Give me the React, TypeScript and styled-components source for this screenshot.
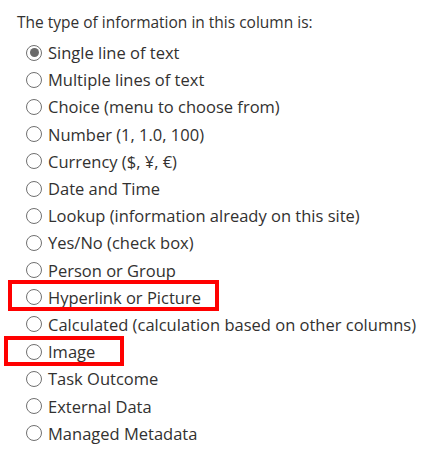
import React, { useState } from 'react';
import styled, { createGlobalStyle } from 'styled-components';

const GlobalStyle = createGlobalStyle`
  html, body {
    margin: 0;
    padding: 0;
    background: #ffffff;
  }
  body {
    font-family: 'Open Sans', 'Noto Sans', 'Liberation Sans', sans-serif;
    color: #323130;
  }
`;

type Box = { left: number; width: number; top: number; bottom: number };

const Panel = styled.div`
  width: 444px;
  height: 463px;
  box-sizing: border-box;
  padding: 9px 0 0 17px;
  overflow: hidden;
`;

const Title = styled.div`
  font-size: 15.5px;
  line-height: 27px;
  color: #323130;
`;

const List = styled.div`
  position: relative;
  display: flex;
  flex-direction: column;
  margin-left: 9px;
  margin-top: 3px;
`;

const Row = styled.label<{ $box?: Box }>`
  position: relative;
  display: flex;
  align-items: center;
  gap: 6px;
  height: 27.2px;
  font-size: 16.5px;
  color: #323130;
  cursor: pointer;
  white-space: nowrap;

  ${({ $box }) =>
    $box &&
    `
    &::after {
      content: '';
      position: absolute;
      top: ${$box.top}px;
      bottom: ${$box.bottom}px;
      left: ${$box.left}px;
      width: ${$box.width}px;
      border: 4px solid #ff0000;
      box-sizing: border-box;
      pointer-events: none;
    }
  `}
`;

const Radio = styled.span<{ $checked: boolean }>`
  flex: none;
  width: 16px;
  height: 16px;
  border-radius: 50%;
  border: 1.3px solid #707070;
  box-sizing: border-box;
  display: flex;
  align-items: center;
  justify-content: center;

  &::before {
    content: '';
    width: 9px;
    height: 9px;
    border-radius: 50%;
    background: ${({ $checked }) => ($checked ? '#6a6a6a' : 'transparent')};
  }
`;

const HiddenInput = styled.input`
  display: none;
`;

const options: { label: string; box?: Box }[] = [
  { label: 'Single line of text' },
  { label: 'Multiple lines of text' },
  { label: 'Choice (menu to choose from)' },
  { label: 'Number (1, 1.0, 100)' },
  { label: 'Currency ($, ¥, €)' },
  { label: 'Date and Time' },
  { label: 'Lookup (information already on this site)' },
  { label: 'Yes/No (check box)' },
  { label: 'Person or Group' },
  { label: 'Hyperlink or Picture', box: { left: -18, width: 211, top: -4, bottom: 0 } },
  { label: 'Calculated (calculation based on other columns)' },
  { label: 'Image', box: { left: -22, width: 120, top: -2, bottom: -1 } },
  { label: 'Task Outcome' },
  { label: 'External Data' },
  { label: 'Managed Metadata' },
];

function App() {
  const [selected, setSelected] = useState(0);
  return (
    <Panel>
      <GlobalStyle />
      <Title>The type of information in this column is:</Title>
      <List>
        {options.map((o, i) => (
          <Row key={o.label} $box={o.box} onClick={() => setSelected(i)}>
            <HiddenInput type="radio" name="coltype" checked={selected === i} readOnly />
            <Radio $checked={selected === i} />
            {o.label}
          </Row>
        ))}
      </List>
    </Panel>
  );
}

export default App;
